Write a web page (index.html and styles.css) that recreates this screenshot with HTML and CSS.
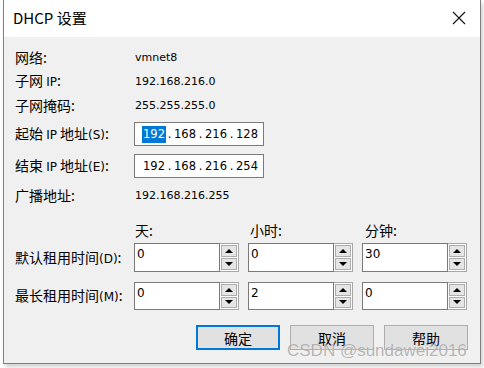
FILE: index.html
```html
<!DOCTYPE html>
<html>
<head>
<meta charset="utf-8">
<link rel="stylesheet" href="styles.css">
</head>
<body>
<div class="window">
  <div class="titlebar">
    <span class="title">DHCP 设置</span>
    <svg class="close" width="14" height="14" viewBox="0 0 14 14"><path d="M1 1 L13 13 M13 1 L1 13" stroke="#111" stroke-width="1.1" fill="none"/></svg>
  </div>
  <div class="content">
    <div class="row first"><span class="label">网络:</span><span class="value">vmnet8</span></div>
    <div class="row"><span class="label">子网 <span class="lat">IP</span>:</span><span class="value">192.168.216.0</span></div>
    <div class="row"><span class="label">子网掩码:</span><span class="value">255.255.255.0</span></div>
    <div class="row r-start"><span class="label">起始 <span class="lat">IP</span> 地址<span class="lat">(S)</span>:</span>
      <div class="ipbox"><span class="seg"><span class="sel">192</span><span class="caret"></span></span><span class="dot">.</span><span class="seg">168</span><span class="dot">.</span><span class="seg">216</span><span class="dot">.</span><span class="seg">128</span></div>
    </div>
    <div class="row r-end"><span class="label">结束 <span class="lat">IP</span> 地址<span class="lat">(E)</span>:</span>
      <div class="ipbox"><span class="seg">192</span><span class="dot">.</span><span class="seg">168</span><span class="dot">.</span><span class="seg">216</span><span class="dot">.</span><span class="seg">254</span></div>
    </div>
    <div class="row r-bc"><span class="label">广播地址:</span><span class="value">192.168.216.255</span></div>

    <div class="row r-head"><span class="label"></span>
      <span class="head">天:</span><span class="head">小时:</span><span class="head">分钟:</span>
    </div>
    <div class="row r-spin1"><span class="label">默认租用时间<span class="lat">(D)</span>:</span>
      <div class="spin"><div class="num">0</div><div class="btns"><div class="b"><i class="up"></i></div><div class="b"><i class="dn"></i></div></div></div>
      <div class="spin"><div class="num">0</div><div class="btns"><div class="b"><i class="up"></i></div><div class="b"><i class="dn"></i></div></div></div>
      <div class="spin"><div class="num">30</div><div class="btns"><div class="b"><i class="up"></i></div><div class="b"><i class="dn"></i></div></div></div>
    </div>
    <div class="row r-spin2"><span class="label">最长租用时间<span class="lat">(M)</span>:</span>
      <div class="spin"><div class="num">0</div><div class="btns"><div class="b"><i class="up"></i></div><div class="b"><i class="dn"></i></div></div></div>
      <div class="spin"><div class="num">2</div><div class="btns"><div class="b"><i class="up"></i></div><div class="b"><i class="dn"></i></div></div></div>
      <div class="spin"><div class="num">0</div><div class="btns"><div class="b"><i class="up"></i></div><div class="b"><i class="dn"></i></div></div></div>
    </div>
    <div class="buttons">
      <div class="btn default">确定</div>
      <div class="btn">取消</div>
      <div class="btn">帮助</div>
    </div>
  </div>
</div>
<div class="watermark">CSDN @sundawei2016</div>
</body>
</html>
```
FILE: styles.css
```css
html, body { margin: 0; padding: 0; }
body {
  width: 484px; height: 368px; overflow: hidden;
  background: #ffffff;
  position: relative;
  font-family: "Noto Sans CJK SC", "DejaVu Sans", sans-serif;
  color: #000;
}
.window {
  margin-left: 3px;
  width: 476px;
  height: 363px;
  border: 1px solid #7f7f7f;
  border-top: none;
  background: #f0f0f0;
  box-shadow: 2px 3px 4px rgba(0,0,0,0.18);
}
.titlebar {
  height: 37px;
  background: #fff;
  display: flex;
  align-items: center;
  justify-content: space-between;
  padding: 0 14px 0 9px;
}
.title { font-size: 15px; line-height: 20px; margin-top: -1px; }
.close { display: block; margin-top: -1px; }
.content { padding-left: 11px; }
.row { display: flex; align-items: center; height: 24px; font-size: 14px; }
.row.first { margin-top: 8px; }
.label { width: 119px; flex: none; white-space: nowrap; line-height: 20px; }
.lat { font-family: "DejaVu Sans", sans-serif; font-size: 12px; }
.value { font-family: "DejaVu Sans", sans-serif; font-size: 11px; padding-left: 1px; }
.r-start { margin-top: 5px; }
.r-end { margin-top: 8px; }
.r-bc { margin-top: 5px; }
.ipbox {
  box-sizing: border-box;
  width: 130px; height: 24px;
  border: 1px solid #7a7a7a;
  background: #fff;
  display: flex; align-items: center;
  padding-left: 8px;
  font-family: "DejaVu Sans", sans-serif; font-size: 11.5px;
}
.seg { width: 22px; display: flex; align-items: center; }
.dot { width: 9px; text-align: center; }
.sel { background: #0078d7; color: #fff; line-height: 17px; padding: 0 1px; margin-left: -1px; }
.caret { width: 1px; height: 17px; background: #e87d0d; }
.r-head { margin-top: 11px; }
.head { width: 114px; flex: none; padding-left: 1px; line-height: 20px; }
.r-spin1 { margin-top: 1px; height: 29px; }
.r-spin2 { margin-top: 10px; height: 28px; }
.spin {
  display: flex; width: 105px; height: 100%;
  margin-right: 9px; flex: none;
}
.num {
  box-sizing: border-box;
  width: 86px; height: 100%;
  border: 1px solid #7a7a7a;
  background: #fff;
  font-family: "DejaVu Sans", sans-serif; font-size: 12px;
  padding: 3px 0 0 2px; line-height: 14px;
}
.btns { display: flex; flex-direction: column; width: 19px; height: 100%; box-sizing: border-box; border: 1px solid #a6a6a6; border-left: none; background: #fff; padding: 1px; gap: 1px; }
.b { flex: 1; background: #e5e5e5; border: 1px solid #adadad; display: flex; align-items: center; justify-content: center; }
.up { width: 0; height: 0; border-left: 4px solid transparent; border-right: 4px solid transparent; border-bottom: 4px solid #000; }
.dn { width: 0; height: 0; border-left: 4px solid transparent; border-right: 4px solid transparent; border-top: 4px solid #000; }
.buttons { display: flex; gap: 10px; margin-top: 15px; padding-left: 181px; }
.btn {
  box-sizing: border-box;
  width: 84px; height: 25px;
  background: #e1e1e1;
  border: 1px solid #adadad;
  font-size: 14px;
  display: flex; align-items: center; justify-content: center;
}
.btn.default { border: 2px solid #0078d7; }
.watermark {
  position: absolute; left: 287px; top: 341px;
  font-family: "Liberation Sans", sans-serif; font-size: 17px;
  color: rgba(120,120,120,0.55);
  text-shadow: 0 0 1px rgba(255,255,255,0.8);
  white-space: nowrap;
}
```
